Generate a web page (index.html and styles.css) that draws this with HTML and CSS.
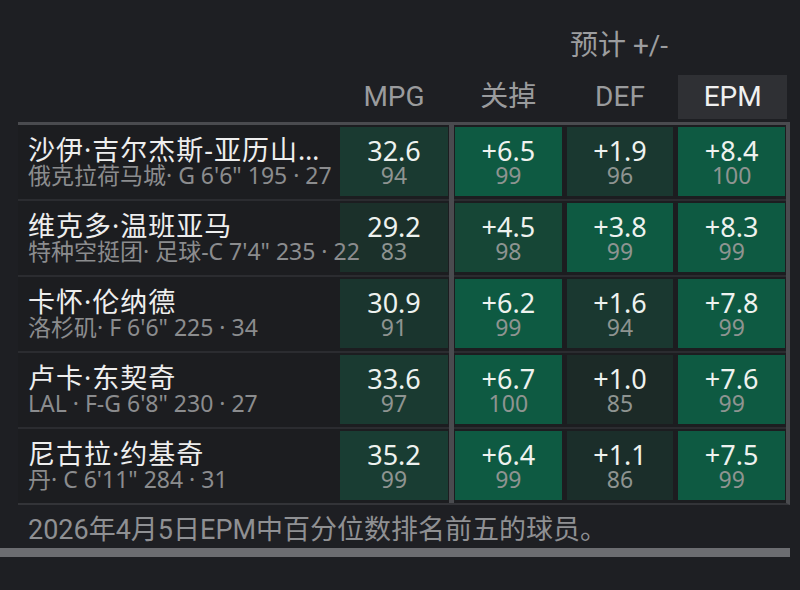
FILE: index.html
```html
<!DOCTYPE html>
<html lang="zh">
<head>
<meta charset="utf-8">
<title>EPM</title>
<link rel="stylesheet" href="styles.css">
</head>
<body>
<div class="page">
  <div class="head">
    <div class="grid title-row">
      <div class="span3"></div>
      <div class="title">预计 +/-</div>
    </div>
    <div class="grid label-row">
      <div></div>
      <div class="label">MPG</div>
      <div></div>
      <div class="group">
        <div class="label">关掉</div>
        <div class="label">DEF</div>
        <div class="label active">EPM</div>
      </div>
    </div>
  </div>

  <div class="table">
    <div class="grid row">
      <div class="who">
        <div class="name">沙伊·吉尔杰斯-亚历山大</div>
        <div class="meta">俄克拉荷马城· G 6'6" 195 · 27</div>
      </div>
      <div class="cell c-mpg1"><span class="v">32.6</span><span class="p">94</span></div>
      <div class="divider"></div>
      <div class="group">
        <div class="cell hi"><span class="v">+6.5</span><span class="p">99</span></div>
        <div class="cell lo2"><span class="v">+1.9</span><span class="p">96</span></div>
        <div class="cell hi"><span class="v">+8.4</span><span class="p">100</span></div>
      </div>
    </div>
    <div class="grid row">
      <div class="who">
        <div class="name">维克多·温班亚马</div>
        <div class="meta">特种空挺团· 足球-C 7'4" 235 · 22</div>
      </div>
      <div class="cell c-mpg2"><span class="v">29.2</span><span class="p">83</span></div>
      <div class="divider"></div>
      <div class="group">
        <div class="cell mid"><span class="v">+4.5</span><span class="p">98</span></div>
        <div class="cell hi"><span class="v">+3.8</span><span class="p">99</span></div>
        <div class="cell hi"><span class="v">+8.3</span><span class="p">99</span></div>
      </div>
    </div>
    <div class="grid row">
      <div class="who">
        <div class="name">卡怀·伦纳德</div>
        <div class="meta">洛杉矶· F 6'6" 225 · 34</div>
      </div>
      <div class="cell c-mpg3"><span class="v">30.9</span><span class="p">91</span></div>
      <div class="divider"></div>
      <div class="group">
        <div class="cell hi"><span class="v">+6.2</span><span class="p">99</span></div>
        <div class="cell lo2"><span class="v">+1.6</span><span class="p">94</span></div>
        <div class="cell hi"><span class="v">+7.8</span><span class="p">99</span></div>
      </div>
    </div>
    <div class="grid row">
      <div class="who">
        <div class="name">卢卡·东契奇</div>
        <div class="meta">LAL · F-G 6'8" 230 · 27</div>
      </div>
      <div class="cell c-mpg4"><span class="v">33.6</span><span class="p">97</span></div>
      <div class="divider"></div>
      <div class="group">
        <div class="cell hi"><span class="v">+6.7</span><span class="p">100</span></div>
        <div class="cell lo0"><span class="v">+1.0</span><span class="p">85</span></div>
        <div class="cell hi"><span class="v">+7.6</span><span class="p">99</span></div>
      </div>
    </div>
    <div class="grid row">
      <div class="who">
        <div class="name">尼古拉·约基奇</div>
        <div class="meta">丹· C 6'11" 284 · 31</div>
      </div>
      <div class="cell c-mpg5"><span class="v">35.2</span><span class="p">99</span></div>
      <div class="divider"></div>
      <div class="group">
        <div class="cell hi"><span class="v">+6.4</span><span class="p">99</span></div>
        <div class="cell lo1"><span class="v">+1.1</span><span class="p">86</span></div>
        <div class="cell hi"><span class="v">+7.5</span><span class="p">99</span></div>
      </div>
    </div>
  </div>

  <p class="caption">2026年4月5日EPM中百分位数排名前五的球员。</p>
  <div class="bar"></div>
</div>
</body>
</html>
```

FILE: styles.css
```css
html, body {
  margin: 0;
  padding: 0;
  background: #1e1f23;
}

body {
  font-family: "Noto Sans", "Noto Sans CJK SC", sans-serif;
  color: #eceeed;
}

.page {
  width: 800px;
  height: 590px;
  overflow: hidden;
}

.grid {
  display: grid;
  grid-template-columns: 322px 108px 7px 330px 1px;
  width: 768px;
  margin-left: 18px;
}

.head {
  padding-top: 24px;
}

.span3 {
  grid-column: 1 / 4;
}

.title {
  font-family: Roboto, "Noto Sans CJK SC", sans-serif;
  font-size: 28px;
  line-height: 44px;
  color: #9c9d9f;
  text-align: center;
  padding-left: 2px;
  padding-right: 4px;
}

.label-row {
  margin-top: 7px;
  margin-bottom: 3px;
}

.label {
  font-family: Roboto, "Noto Sans CJK SC", sans-serif;
  font-size: 28px;
  line-height: 44px;
  height: 44px;
  color: #9a9b9d;
  text-align: center;
}

.label.active {
  background: #2f3034;
  color: #f0f0f0;
  margin-right: -2px;
}

.group {
  display: grid;
  grid-template-columns: repeat(3, 1fr);
  column-gap: 5px;
}

.table {
  width: 768px;
  margin-left: 18px;
  border-top: 3px solid #4a4b4f;
  border-right: 4px solid #4a4b4f;
  border-bottom: 2px solid #333438;
  background: #1c1d20;
}

.table .grid {
  margin-left: 0;
}

.row {
  padding: 2px 0 3px;
}

.row + .row {
  border-top: 2px solid #2b2c30;
}

.who {
  position: relative;
  z-index: 1;
  padding-left: 10px;
  display: flex;
  flex-direction: column;
  justify-content: center;
  min-width: 0;
}

.name {
  font-size: 27px;
  line-height: 27px;
  letter-spacing: 1px;
  color: #eeeeee;
  white-space: nowrap;
  overflow: hidden;
  text-overflow: ellipsis;
  padding: 4px 15.5px 4px 0;
  margin: -4px 0;
}

.meta {
  font-size: 23px;
  line-height: 23px;
  margin-top: 1px;
  color: #8b8c8e;
  white-space: nowrap;
}

.cell {
  height: 69px;
  display: flex;
  flex-direction: column;
  align-items: center;
  justify-content: center;
}

.v {
  font-size: 27px;
  line-height: 27px;
  color: #eef2ef;
}

.p {
  font-size: 23px;
  line-height: 22px;
  color: #8e9491;
}

.divider {
  background: #4a4b4f;
  margin: -4px 1px -3px 1px;
}

.hi { background: #0e5a42; }
.mid { background: #164636; }
.lo2 { background: #1a3830; }
.lo1 { background: #1b2e2a; }
.lo0 { background: #1c2a27; }

.c-mpg1 { background: #1a3a31; }
.c-mpg2 { background: #1b302a; }
.c-mpg3 { background: #1a352e; }
.c-mpg4 { background: #1a3a31; }
.c-mpg5 { background: #193d33; }

.caption {
  margin: 0;
  padding: 7px 0 0 28px;
  font-family: Roboto, "Noto Sans CJK SC", sans-serif;
  font-size: 27px;
  line-height: 36px;
  color: #8f9093;
}

.bar {
  width: 790px;
  height: 9px;
  background: #6c6d71;
}
```
